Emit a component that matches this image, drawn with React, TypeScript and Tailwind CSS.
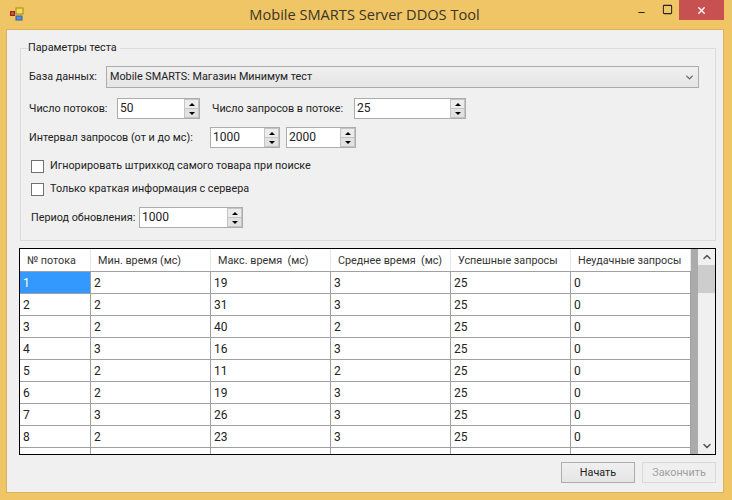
import { Minus, Square, X, ChevronDown, ChevronUp } from 'lucide-react'

const rows = [
  ['1', '2', '19', '3', '25', '0'],
  ['2', '2', '31', '3', '25', '0'],
  ['3', '2', '40', '2', '25', '0'],
  ['4', '3', '16', '3', '25', '0'],
  ['5', '2', '11', '2', '25', '0'],
  ['6', '2', '19', '3', '25', '0'],
  ['7', '3', '26', '3', '25', '0'],
  ['8', '2', '23', '3', '25', '0'],
  ['', '', '', '', '', ''],
]

const headers = ['№ потока', 'Мин. время (мс)', 'Макс. время  (мс)', 'Среднее время  (мс)', 'Успешные запросы', 'Неудачные запросы']
const colWidths = ['w-[71px]', 'w-[120px]', 'w-[120px]', 'w-[120px]', 'w-[120px]', 'w-[120px]']

function Spin({ value, width }: { value: string; width: string }) {
  return (
    <div className={`flex h-[21px] ${width} items-stretch border border-[#acacac] bg-white`}>
      <span className="flex-1 pl-[2px] text-[12px] leading-[19px] text-[#222]">{value}</span>
      <div className="flex w-[15px] flex-col bg-[#efefef]">
        <div className="flex flex-1 items-center justify-center border border-[#c4c4c4] bg-[#ececec]">
          <div className="h-0 w-0 border-x-[3.5px] border-b-[3.5px] border-x-transparent border-b-black" />
        </div>
        <div className="flex flex-1 items-center justify-center border border-t-0 border-[#c4c4c4] bg-[#e2e2e2]">
          <div className="h-0 w-0 border-x-[3.5px] border-t-[3.5px] border-x-transparent border-t-black" />
        </div>
      </div>
    </div>
  )
}

function Check({ label, className }: { label: string; className: string }) {
  return (
    <div className={`flex items-center ${className}`}>
      <div className="h-[13px] w-[13px] border border-[#707070] bg-white" />
      <span className="ml-[6px] whitespace-nowrap">{label}</span>
    </div>
  )
}

export default function App() {
  return (
    <div className="flex h-[500px] w-[732px] flex-col overflow-hidden bg-[#f0c566] font-['Roboto','Liberation_Sans',sans-serif] text-[10.8px] leading-[18px] text-[#222]">
      {/* Title bar */}
      <div className="flex h-[29px] items-start">
        <svg width="14" height="14" viewBox="0 0 14 14" className="ml-[10px] mt-[7px]">
          <rect x="0.5" y="4.5" width="4" height="4" fill="#d8453a" stroke="#8a2b24" />
          <rect x="6" y="1" width="7" height="6" fill="#f5dc4d" stroke="#a08c20" />
          <rect x="6" y="9" width="6" height="4" fill="#5b8fd8" stroke="#35609c" />
        </svg>
        <div className="flex-1 pl-[78px] pt-[4px] text-center font-['Open_Sans',sans-serif] text-[14.6px] leading-[20px] text-[#3a3526]">Mobile SMARTS Server DDOS Tool</div>
        <div className="flex items-start pr-[8px]">
          <div className="flex h-[20px] w-[28px] items-center justify-center">
            <Minus size={9} strokeWidth={3} color="#222" className="mt-[5px]" />
          </div>
          <div className="flex h-[20px] w-[25px] items-center justify-center pb-[2px]">
            <Square size={11} strokeWidth={2.2} color="#222" />
          </div>
          <div className="ml-[-1px] flex h-[20px] w-[45px] items-center justify-center bg-[#c75050]">
            <X size={11} strokeWidth={3} color="#fff" />
          </div>
        </div>
      </div>

      {/* Client area */}
      <div className="ml-[6px] mr-[8px] h-[464px] border border-[#d8b25c] bg-[#f0f0f0] pl-[12px] pr-[7px]">
        <fieldset className="ml-[1px] mt-[10px] h-[201px] w-[696px] border border-[#dcdcdc] pl-[8px]">
          <legend className="ml-[-1px] px-0 pr-[3px] leading-[16px]">Параметры теста</legend>
          <div className="mt-[10px] flex items-center">
            <span className="w-[77px] whitespace-nowrap">База данных:</span>
            <div className="flex h-[22px] w-[593px] items-center justify-between border border-[#acacac] bg-gradient-to-b from-[#f0f0f0] to-[#e5e5e5] pl-[3px] pr-[3px]">
              <span>Mobile SMARTS: Магазин Минимум тест</span>
              <ChevronDown size={11} strokeWidth={3} color="#666" />
            </div>
          </div>
          <div className="mt-[10px] flex items-center">
            <span className="w-[88px] whitespace-nowrap">Число потоков:</span>
            <Spin value="50" width="w-[83px]" />
            <span className="ml-[12px] w-[142px] whitespace-nowrap">Число запросов в потоке:</span>
            <Spin value="25" width="w-[112px]" />
          </div>
          <div className="mt-[8px] flex items-center">
            <span className="w-[181px] whitespace-nowrap">Интервал запросов (от и до мс):</span>
            <Spin value="1000" width="w-[70px]" />
            <div className="w-[6px]" />
            <Spin value="2000" width="w-[70px]" />
          </div>
          <Check label="Игнорировать штрихкод самого товара при поиске" className="ml-[2px] mt-[9px]" />
          <Check label="Только краткая информация с сервера" className="ml-[2px] mt-[5px]" />
          <div className="ml-[2px] mt-[9px] flex items-center">
            <span className="w-[108px] whitespace-nowrap">Период обновления:</span>
            <Spin value="1000" width="w-[104px]" />
          </div>
        </fieldset>

        {/* Results grid */}
        <div className="mt-[7px] flex h-[207px] w-[697px] overflow-hidden border border-black bg-[#ababab]">
          <div className="w-[671px] shrink-0">
            <div className="flex h-[22px] bg-white">
              {headers.map((h, i) => (
                <div key={h} className={`${colWidths[i]} shrink-0 whitespace-pre border-r border-[#e6e6e6] pl-[7px] leading-[23px] text-[#333]`}>{h}</div>
              ))}
            </div>
            {rows.map((row, r) => (
              <div key={r} className="flex h-[22px] border-t border-[#a0a0a0] bg-white text-[12px]">
                {row.map((c, i) => (
                  <div
                    key={i}
                    className={`${colWidths[i]} shrink-0 border-r border-[#a0a0a0] pl-[3px] leading-[23px] ${r === 0 && i === 0 ? 'bg-[#3399ff] text-white' : ''}`}
                  >
                    {c}
                  </div>
                ))}
              </div>
            ))}
          </div>
          <div className="ml-[7px] flex flex-1 flex-col items-center bg-[#f0f0f0]">
            <ChevronUp size={12} strokeWidth={3} color="#555" className="mt-[2px]" />
            <div className="mt-[2px] h-[28px] w-full bg-[#cdcdcd]" />
            <ChevronDown size={12} strokeWidth={3} color="#555" className="mb-[2px] mt-auto" />
          </div>
        </div>

        {/* Buttons */}
        <div className="mt-[7px] flex justify-end gap-[7px]">
          <div className="flex h-[21px] w-[74px] items-center justify-center border border-[#acacac] bg-gradient-to-b from-[#f0f0f0] to-[#e5e5e5]">Начать</div>
          <div className="flex h-[21px] w-[74px] items-center justify-center border border-[#d9d9d9] bg-[#efefef] text-[#a0a0a0]">Закончить</div>
        </div>
      </div>
    </div>
  )
}
